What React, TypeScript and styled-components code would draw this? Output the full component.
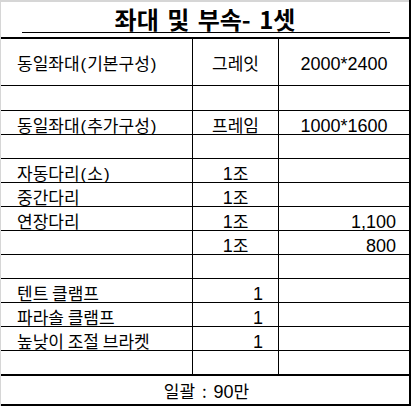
import React from "react";
import styled, { createGlobalStyle } from "styled-components";

const Global = createGlobalStyle`
  html, body { margin: 0; padding: 0; background: #fff; }
  body { font-family: "Noto Sans CJK KR", "Noto Sans", sans-serif; color: #000; }
`;

const Sheet = styled.div`
  width: 411px;
  height: 406px;
  box-sizing: border-box;
  border-right: 2px solid #000;
  background: #fff;
`;

const Inner = styled.div`
  box-sizing: border-box;
  height: 100%;
  border-top: 2px solid #d6d6d6;
  border-left: 1px solid #d6d6d6;
  display: flex;
  flex-direction: column;
`;

const TitleRow = styled.div`
  height: 37px;
  box-sizing: border-box;
  border-bottom: 2px solid #000;
  padding: 0 19px 0 21px;
  display: flex;
  align-items: flex-start;
`;

const Title = styled.h1`
  flex: 1;
  margin: 0;
  height: 31px;
  box-sizing: border-box;
  border-bottom: 1px solid #000;
  text-align: center;
  font-size: 24px;
  font-weight: 700;
  line-height: 34px;
  word-spacing: 3px;
  padding-right: 2px;
`;

const Row = styled.div<{ $h: number; $thick?: boolean }>`
  height: ${(p) => p.$h}px;
  box-sizing: border-box;
  border-bottom: ${(p) => (p.$thick ? 2 : 1)}px solid #000;
  display: grid;
  grid-template-columns: 192px 86px 130px;
`;

const Cell = styled.div<{ $align?: "left" | "center" | "right"; $last?: boolean; $pad?: number }>`
  box-sizing: border-box;
  border-right: ${(p) => (p.$last ? "none" : "1px solid #000")};
  display: flex;
  align-items: center;
  justify-content: ${(p) =>
    p.$align === "right" ? "flex-end" : p.$align === "center" ? "center" : "flex-start"};
  padding: 1px ${(p) => (p.$align === "right" ? p.$pad ?? 14 : 0)}px 0
    ${(p) => (p.$align === "left" || !p.$align ? 16 : 0)}px;
  font-size: 17px;
  white-space: nowrap;
`;

const Text = styled.span`
  white-space: pre;
`;

const Num = styled.span`
  font-family: "Liberation Sans", Arial, sans-serif;
  font-size: 18px;
`;

const Paren = styled.span`
  font-family: "Liberation Sans", Arial, sans-serif;
  font-size: 17px;
  padding: 0 1px;
`;

const TotalRow = styled.div`
  height: 30px;
  box-sizing: border-box;
  border-bottom: 2px solid #000;
  display: flex;
  align-items: center;
  justify-content: center;
  padding: 1px 0 0 3px;
  font-size: 17px;
  word-spacing: 3px;
`;

function fmt(s?: string) {
  if (!s) return null;
  return (
    <Text>
      {s.split(/([0-9*,]+|[()])/).map((part, i) =>
        /^[0-9*,]+$/.test(part) ? (
          <Num key={i}>{part}</Num>
        ) : /^[()]$/.test(part) ? (
          <Paren key={i}>{part}</Paren>
        ) : (
          <React.Fragment key={i}>{part}</React.Fragment>
        )
      )}
    </Text>
  );
}

type R = {
  a?: string;
  b?: string;
  c?: string;
  h?: number;
  bAlign?: "center" | "right";
  cAlign?: "center" | "right";
  thick?: boolean;
};

const rows: R[] = [
  { a: "동일좌대(기본구성)", b: "그레잇", c: "2000*2400", h: 47, cAlign: "center" },
  { h: 25 },
  { a: "동일좌대(추가구성)", b: "프레임", c: "1000*1600", cAlign: "center" },
  {},
  { a: "자동다리(소)", b: "1조" },
  { a: "중간다리", b: "1조" },
  { a: "연장다리", b: "1조", c: "1,100", cAlign: "right" },
  { b: "1조", c: "800", cAlign: "right" },
  {},
  { a: "텐트 클램프", b: "1", bAlign: "right" },
  { a: "파라솔 클램프", b: "1", bAlign: "right" },
  { a: "높낮이 조절 브라켓", b: "1", bAlign: "right" },
  { h: 25, thick: true },
];

export default function App() {
  return (
    <>
      <Global />
      <Sheet>
        <Inner>
          <TitleRow>
            <Title>좌대 및 부속- 1셋</Title>
          </TitleRow>
          {rows.map((r, i) => (
            <Row key={i} $h={r.h ?? 24} $thick={r.thick}>
              <Cell $align="left">{fmt(r.a)}</Cell>
              <Cell $align={r.bAlign ?? "center"} $pad={15}>
                {fmt(r.b)}
              </Cell>
              <Cell $align={r.cAlign ?? "center"} $pad={13} $last>
                {fmt(r.c)}
              </Cell>
            </Row>
          ))}
          <TotalRow>{fmt("일괄 : 90만")}</TotalRow>
        </Inner>
      </Sheet>
    </>
  );
}
